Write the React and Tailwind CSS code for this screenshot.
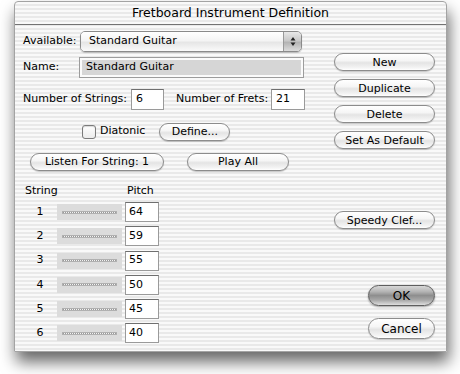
import React from "react";

const stripes =
  "bg-[repeating-linear-gradient(to_bottom,#f9f9f9_0px,#f9f9f9_2px,#e9e9e9_2px,#e9e9e9_4px)]";

function AquaButton({ children, w, h = 18, def = false }) {
  return (
    <div
      className={
        "flex items-center justify-center rounded-full border text-[11px] text-black leading-none " +
        (def
          ? "border-[#5e5e5e] bg-[linear-gradient(to_bottom,#d8d8d8_0%,#b4b4b4_30%,#8e8e8e_50%,#a9a9a9_75%,#dedede_100%)] shadow-[0_1px_2px_rgba(0,0,0,0.35)]"
          : "border-[#8c8c8c] bg-[linear-gradient(to_bottom,#ffffff_0%,#f6f6f6_40%,#e4e4e4_55%,#f3f3f3_85%,#ffffff_100%)] shadow-[0_1px_1px_rgba(0,0,0,0.2)]")
      }
      style={{ width: w, height: h }}
    >
      {children}
    </div>
  );
}

function NumField({ value, w }) {
  return (
    <div
      className="flex h-[21px] items-center bg-white pl-[4px] text-[11px] border border-[#9a9a9a] border-t-[#6f6f6f]"
      style={{ width: w }}
    >
      {value}
    </div>
  );
}

function Slider() {
  return (
    <div className="flex h-[16px] w-[65px] items-center justify-center bg-[#dcdcdc]">
      <div className="h-[3px] w-[55px] border border-[#b0b0b0] bg-[repeating-linear-gradient(to_right,#9a9a9a_0px,#9a9a9a_1px,#f4f4f4_1px,#f4f4f4_2px)]" />
    </div>
  );
}

export default function App() {
  const rows = [
    ["1", "64"],
    ["2", "59"],
    ["3", "55"],
    ["4", "50"],
    ["5", "45"],
    ["6", "40"],
  ];
  return (
    <div
      className="relative h-[374px] w-[460px] overflow-hidden bg-white pl-[14px] pt-[1px] text-black"
      style={{ fontFamily: '"DejaVu Sans", sans-serif' }}
    >
      <div
        className={
          "flex h-[351px] w-[433px] flex-col rounded-t-[4px] border border-[#a3a3a3] shadow-[2px_10px_16px_rgba(0,0,0,0.6)] " +
          stripes
        }
      >
        {/* title bar */}
        <div className="flex h-[23px] items-center justify-center border-b border-[#737373] text-[12.5px]">
          Fretboard Instrument Definition
        </div>

        <div className="flex flex-1">
          {/* left column */}
          <div className="flex w-[310px] flex-col pl-[8px] text-[11px]">
            {/* Available */}
            <div className="mt-[6px] flex h-[21px] items-center">
              <span className="w-[57px]">Available:</span>
              <div className="flex h-[21px] w-[222px] items-stretch overflow-hidden rounded-[5px] border border-[#8a8a8a] shadow-[0_1px_1px_rgba(0,0,0,0.2)]">
                <div className="flex flex-1 items-center bg-[linear-gradient(to_bottom,#ffffff,#f4f4f4_45%,#e6e6e6_55%,#fafafa)] pl-[8px]">
                  Standard Guitar
                </div>
                <div className="flex w-[18px] items-center justify-center border-l border-[#9a9a9a] bg-[linear-gradient(to_bottom,#e8e8e8,#c9c9c9_45%,#b4b4b4_55%,#dcdcdc)]">
                  <svg width="6" height="11" viewBox="0 0 6 11">
                    <path d="M3 1 L5.5 4.5 L0.5 4.5 Z" fill="#222" />
                    <path d="M3 10 L5.5 6.5 L0.5 6.5 Z" fill="#222" />
                  </svg>
                </div>
              </div>
            </div>

            {/* Name */}
            <div className="mt-[5px] flex h-[21px] items-center">
              <span className="w-[56px]">Name:</span>
              <div className="h-[21px] w-[225px] border border-[#9c9c9c] bg-[#fbfbfb] p-[2px]">
                <div className="flex h-full items-center bg-[#d6d6d6] pl-[4px]">
                  Standard Guitar
                </div>
              </div>
            </div>

            {/* strings/frets */}
            <div className="mt-[11px] flex h-[21px] items-center">
              <span className="w-[108px]">Number of Strings:</span>
              <NumField value="6" w={33} />
              <span className="ml-[12px] w-[95px]">Number of Frets:</span>
              <NumField value="21" w={34} />
            </div>

            {/* Diatonic */}
            <div className="mt-[12px] flex h-[19px] items-center">
              <div className="ml-[59px] h-[14px] w-[14px] rounded-[3px] border border-[#7b7b7b] bg-[linear-gradient(to_bottom,#ffffff,#ececec)] shadow-[inset_0_1px_1px_rgba(0,0,0,0.15)]" />
              <span className="ml-[4px]">Diatonic</span>
              <div className="ml-[14px]">
                <AquaButton w={71}>Define...</AquaButton>
              </div>
            </div>

            {/* Listen */}
            <div className="mt-[11px] flex h-[19px] items-center">
              <div className="ml-[7px]">
                <AquaButton w={134}>Listen For String: 1</AquaButton>
              </div>
              <div className="ml-[23px]">
                <AquaButton w={102}>Play All</AquaButton>
              </div>
            </div>

            {/* header */}
            <div className="mt-[12px] flex h-[16px] items-center">
              <span className="ml-[2px] w-[102px]">String</span>
              <span>Pitch</span>
            </div>

            {/* rows */}
            <div className="mt-[3px] flex flex-col gap-[4.3px]">
              {rows.map(([n, p]) => (
                <div key={n} className="flex h-[20px] items-center">
                  <span className="w-[34px] text-center">{n}</span>
                  <Slider />
                  <div className="ml-[3px] flex h-[20px] w-[34px] items-center border border-[#9a9a9a] border-t-[#6f6f6f] bg-white pl-[3px]">
                    {p}
                  </div>
                </div>
              ))}
            </div>
          </div>

          {/* right column */}
          <div className="flex flex-1 flex-col items-end pr-[11px]">
            <div className="mt-[28px] flex flex-col gap-[8px]">
              <AquaButton w={101}>New</AquaButton>
              <AquaButton w={101}>Duplicate</AquaButton>
              <AquaButton w={101}>Delete</AquaButton>
              <AquaButton w={101}>Set As Default</AquaButton>
            </div>
            <div className="mt-[62px]">
              <AquaButton w={101}>Speedy Clef...</AquaButton>
            </div>
            <div className="mt-[56px]">
              <AquaButton w={67} h={21} def>
                <span className="text-[12px]">OK</span>
              </AquaButton>
            </div>
            <div className="mt-[12px]">
              <AquaButton w={67} h={21}>
                <span className="text-[12px]">Cancel</span>
              </AquaButton>
            </div>
          </div>
        </div>
      </div>
    </div>
  );
}
